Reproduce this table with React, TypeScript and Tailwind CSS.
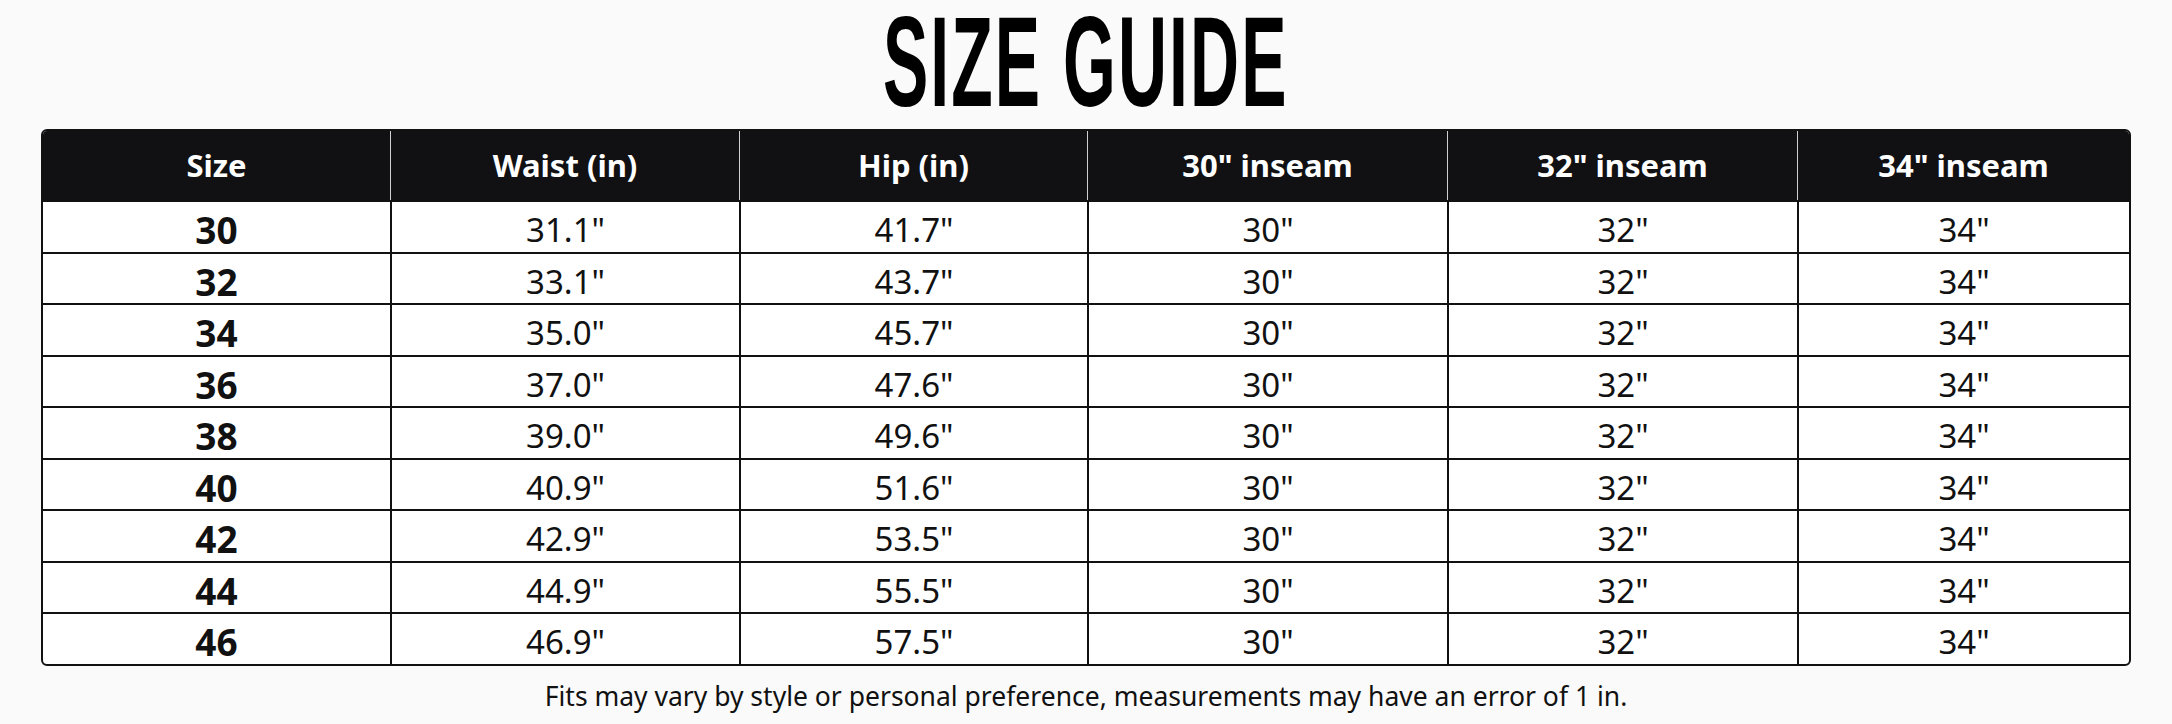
const columns = ['Size', 'Waist (in)', 'Hip (in)', '30" inseam', '32" inseam', '34" inseam']

const rows = [
  ['30', '31.1"', '41.7"'],
  ['32', '33.1"', '43.7"'],
  ['34', '35.0"', '45.7"'],
  ['36', '37.0"', '47.6"'],
  ['38', '39.0"', '49.6"'],
  ['40', '40.9"', '51.6"'],
  ['42', '42.9"', '53.5"'],
  ['44', '44.9"', '55.5"'],
  ['46', '46.9"', '57.5"'],
]

const grid = 'grid grid-cols-[347px_349px_348px_360px_350px_332px]'

function App() {
  return (
    <div className="min-h-[724px] w-full bg-[#fafafa] font-['Noto_Sans',sans-serif] text-[#111]">
      <div className="flex h-[129px] justify-center">
        <h1 className="-mt-[2px] inline-block h-[128px] origin-center scale-x-[0.53] font-['Liberation_Sans',sans-serif] text-[128px] font-bold leading-[128px] tracking-[4px] text-black">
          SIZE GUIDE
        </h1>
      </div>

      <div className="mx-[41px] overflow-hidden rounded-[6px] border-2 border-[#111] bg-white">
        <div className={`${grid} h-[69px] bg-[#111114] text-white`}>
          {columns.map((c, i) => (
            <div
              key={c}
              className={`flex items-center justify-center text-[31px] font-bold ${i > 0 ? 'border-l border-[#d0d0d0]' : ''}`}
            >
              {c}
            </div>
          ))}
        </div>

        {rows.map(r => (
          <div key={r[0]} className={`${grid} h-[51.5px] border-t-2 border-[#111]`}>
            <div className="flex items-center justify-center text-[37px] font-bold">{r[0]}</div>
            {[r[1], r[2], '30"', '32"', '34"'].map((v, i) => (
              <div key={i} className="flex items-center justify-center border-l-2 border-[#111] text-[33px]">
                {v}
              </div>
            ))}
          </div>
        ))}
      </div>

      <p className="mt-[11px] text-center text-[26.5px] text-[#111]">
        Fits may vary by style or personal preference, measurements may have an error of 1 in.
      </p>
    </div>
  )
}

export default App
